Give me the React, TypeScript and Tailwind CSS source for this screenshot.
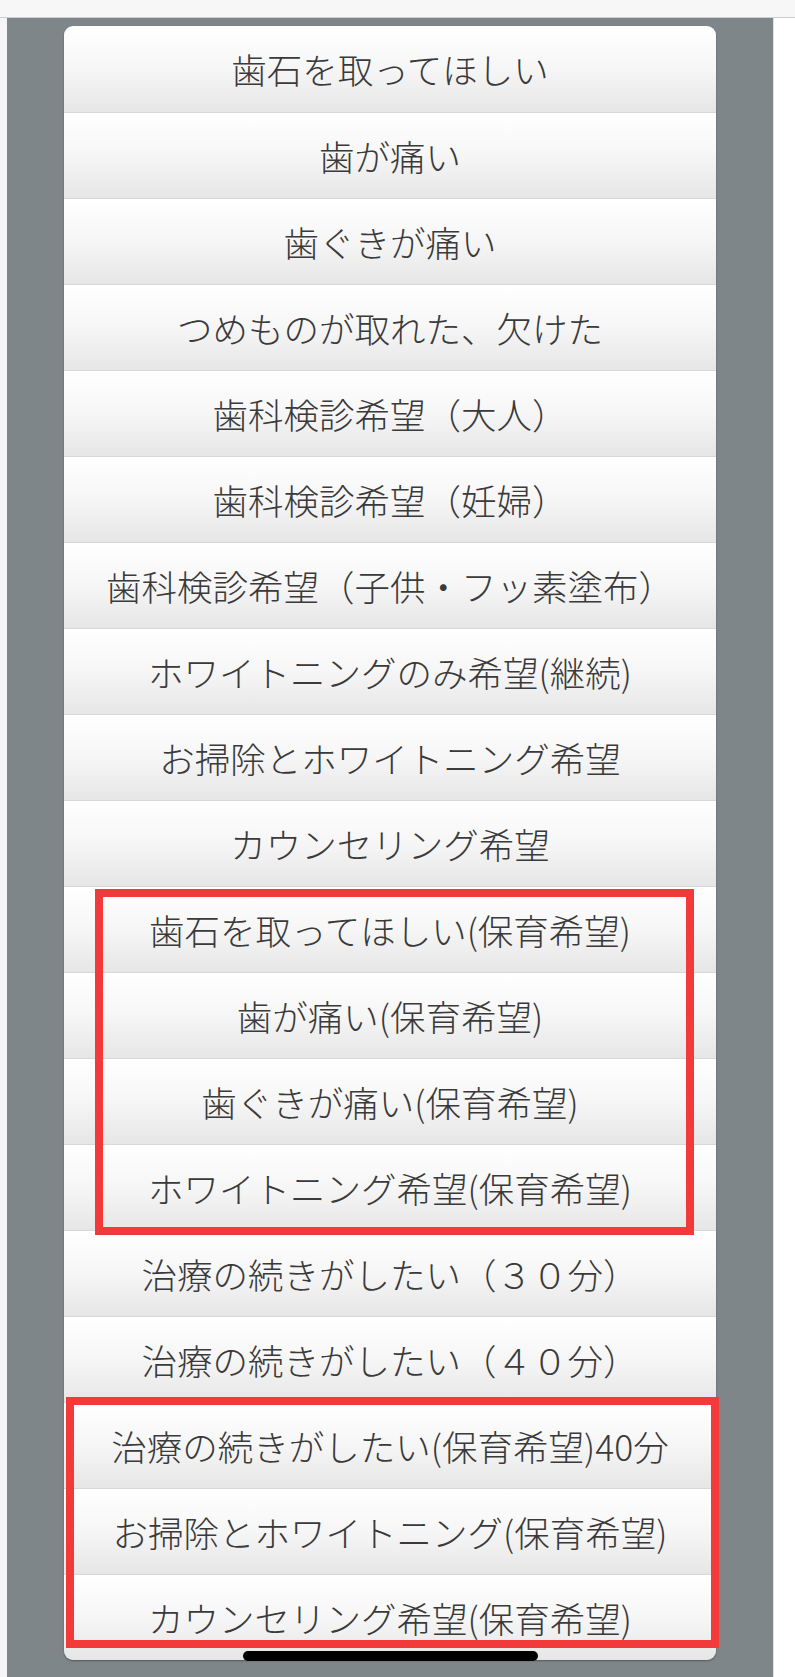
import React from 'react';

const MENU: string[] = [
  '歯石を取ってほしい',
  '歯が痛い',
  '歯ぐきが痛い',
  'つめものが取れた、欠けた',
  '歯科検診希望（大人）',
  '歯科検診希望（妊婦）',
  '歯科検診希望（子供・フッ素塗布）',
  'ホワイトニングのみ希望(継続)',
  'お掃除とホワイトニング希望',
  'カウンセリング希望',
  '歯石を取ってほしい(保育希望)',
  '歯が痛い(保育希望)',
  '歯ぐきが痛い(保育希望)',
  'ホワイトニング希望(保育希望)',
  '治療の続きがしたい（３０分）',
  '治療の続きがしたい（４０分）',
  '治療の続きがしたい(保育希望)40分',
  'お掃除とホワイトニング(保育希望)',
  'カウンセリング希望(保育希望)',
];

function MenuRow({ label, first }: { label: string; first: boolean }) {
  return (
    <button
      type="button"
      className={
        'flex h-[86px] w-full items-center justify-center bg-gradient-to-b from-[#ffffff] via-[#f6f6f6] to-[#e6e6e6] text-[35.5px] font-light leading-none text-[#3a3a3a] ' +
        (first ? '' : 'border-t border-[#d8d8d8]')
      }
    >
      {label}
    </button>
  );
}

export default function App() {
  return (
    <div
      className="relative flex h-[1677px] w-[795px] flex-col overflow-hidden bg-white"
      style={{ fontFamily: '"Noto Sans CJK JP", "Noto Sans", sans-serif' }}
    >
      {/* ブラウザ上部のバー */}
      <div className="h-[18px] shrink-0 border-b border-[#cfcfcf] bg-[#f7f7f7]" />

      <div className="flex flex-1">
        <div className="w-[7px] bg-[#f5f5f5]" />
        <div className="flex-1 bg-[#7f8689] pl-[57px] pt-[8px]">
          <div className="w-[652px] overflow-hidden rounded-[9px] shadow-[0_1px_2px_rgba(0,0,0,0.35)]">
            {MENU.map((m, i) => (
              <MenuRow key={m} label={m} first={i === 0} />
            ))}
          </div>
        </div>
        <div className="w-[22px] border-l border-[#e2e2e2] bg-white" />
      </div>

      {/* 赤枠（注釈） */}
      <div className="pointer-events-none absolute left-[95px] top-[889px] h-[346px] w-[599px] border-[8px] border-[#f23a3a]" />
      <div className="pointer-events-none absolute left-[66px] top-[1397px] h-[251px] w-[653px] border-[8px] border-[#f23a3a]" />

      {/* ホームインジケーター */}
      <div className="absolute left-[243px] top-[1651px] h-[10px] w-[295px] rounded-full bg-black" />
    </div>
  );
}
